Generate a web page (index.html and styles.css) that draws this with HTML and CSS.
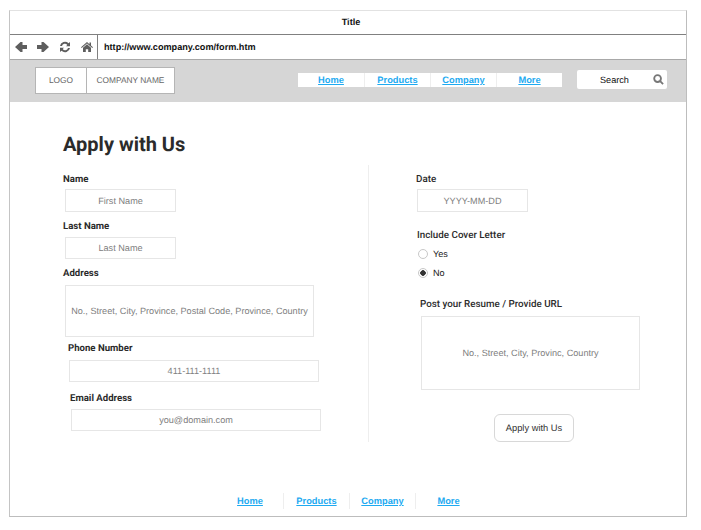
FILE: index.html
```html
<!DOCTYPE html>
<html lang="en">
<head>
<meta charset="utf-8">
<title>Apply with Us</title>
<link rel="stylesheet" href="styles.css">
</head>
<body>
<div class="frame">
  <div class="titlebar">Title</div>
  <div class="addressbar">
    <div class="browser-icons">
      <svg class="bi" viewBox="0 0 12 12"><path d="M0 6 5.500 1H7.500V4H12V8H7.500V11H5.500Z"/></svg>
      <svg class="bi" viewBox="0 0 12 12"><path d="M12 6 6.500 1H4.500V4H0V8H4.500V11H6.500Z"/></svg>
      <svg class="bi" viewBox="0 0 12 12"><path d="M1 5A5 4.800 0 0 1 9.500 2.300L11 1V5.200H7L8.300 3.900A3 3 0 0 0 3 5ZM11 7A5 4.800 0 0 1 2.500 9.700L1 11V6.800H5L3.700 8.100A3 3 0 0 0 9 7Z"/></svg>
      <svg class="bi" viewBox="0 0 12 12"><path d="M6 1 8.500 3.200V1.500H10V4.500L12 6.300 11.300 7 6 2.500 .7 7 0 6.300ZM2 6.800 6 3.300 10 6.800V11H7.200V8.200H4.800V11H2Z"/></svg>
    </div>
    <div class="url">http://www.company.com/form.htm</div>
  </div>
  <header class="topbar">
    <div class="brand">
      <span class="brand-logo">LOGO</span>
      <span class="brand-name">COMPANY NAME</span>
    </div>
    <nav class="topnav">
      <a href="#">Home</a><a href="#">Products</a><a href="#">Company</a><a href="#">More</a>
    </nav>
    <div class="search">
      <span class="search-text">Search</span>
      <svg class="search-icon" viewBox="0 0 12 12"><circle cx="5" cy="5" r="3.700"/><path d="M7.800 7.800 11 11"/></svg>
    </div>
  </header>
  <main class="content">
    <h1>Apply with Us</h1>
    <div class="columns">
      <section class="col-left">
        <label class="lbl lbl-name">Name</label>
        <div class="field f-first">First Name</div>
        <label class="lbl lbl-last">Last Name</label>
        <div class="field f-last">Last Name</div>
        <label class="lbl lbl-address">Address</label>
        <div class="field f-address">No., Street, City, Province, Postal Code, Province, Country</div>
        <label class="lbl lbl-phone">Phone Number</label>
        <div class="field f-phone">411-111-1111</div>
        <label class="lbl lbl-email">Email Address</label>
        <div class="field f-email">you@domain.com</div>
      </section>
      <section class="col-right">
        <label class="lbl lbl-date">Date</label>
        <div class="field f-date">YYYY-MM-DD</div>
        <label class="lbl lbl-cover">Include Cover Letter</label>
        <div class="radio r-yes"><span class="dot"></span>Yes</div>
        <div class="radio r-no"><span class="dot on"></span>No</div>
        <label class="lbl lbl-post">Post your Resume / Provide URL</label>
        <div class="field f-post">No., Street, City, Provinc, Country</div>
        <button class="apply" type="button">Apply with Us</button>
      </section>
    </div>
  </main>
  <footer class="bottomnav">
    <a href="#">Home</a><a href="#">Products</a><a href="#">Company</a><a href="#">More</a>
  </footer>
</div>
</body>
</html>
```
FILE: styles.css
```css
* { box-sizing: border-box; }
html, body { margin: 0; background: #fff; }
body { padding: 10px 0 0 9px; font-family: "Liberation Sans", Arial, sans-serif; font-size: 9.150px; text-rendering: geometricPrecision; color: #222; }

.frame { width: 678px; height: 507px; border: 1px solid #bdbdbd; border-top-color: #e2e2e2; border-left-color: #c4c4c4; display: flex; flex-direction: column; }

.titlebar { height: 24px; flex: none; border-bottom: 1px solid #808080; display: flex; align-items: center; justify-content: center; padding: 0 0 2px 6px; font-weight: 700; color: #111; }

.addressbar { height: 25px; flex: none; display: flex; border-bottom: 1px solid #a8a8a8; }
.browser-icons { width: 88px; border-right: 1px solid #808080; display: flex; align-items: center; gap: 10px; padding-left: 5px; }
.bi { width: 12px; height: 12px; fill: #5e5e5e; }
.url { padding-left: 6px; display: flex; align-items: center; font-weight: 700; color: #111; }

.topbar { height: 42px; flex: none; background: #d6d6d6; display: flex; align-items: center; padding-left: 25px; }
.brand { width: 140px; height: 27px; margin-bottom: 2px; display: flex; background: #fff; border: 1px solid #b5b5b5; font-size: 8.350px; color: #666; }
.brand-logo { width: 51px; border-right: 1px solid #b5b5b5; display: flex; align-items: center; justify-content: center; }
.brand-name { flex: 1; display: flex; align-items: center; justify-content: center; }

.topnav { margin: 0 0 2px 123px; width: 264px; height: 14px; background: #fff; display: flex; font-size: 9.300px; }
.topnav a { width: 66px; text-align: center; line-height: 14px; border-left: 1px solid #eee; }
.topnav a:first-child { border-left: 0; }
a { color: #1eaaf1; font-weight: 700; text-decoration: underline; }

.search { margin: 0 0 3px 15px; width: 90px; height: 19px; background: #fff; border-radius: 2px; display: flex; align-items: center; padding-left: 23px; color: #111; }
.search-text { flex: 1; }
.search-icon { width: 11px; height: 11px; margin-right: 3px; fill: none; stroke: #777; stroke-width: 2; }

.content { flex: 1; padding: 0 0 0 53px; min-height: 0; }
h1 { margin: 31px 0 0; height: 23px; line-height: 23px; font-family: Roboto, "Liberation Sans", sans-serif; font-size: 20px; font-weight: 700; color: #2b2b2b; }

.columns { display: flex; margin-top: 9px; height: 277px; }
.col-left { width: 306px; border-right: 1px solid #eee; display: flex; flex-direction: column; align-items: flex-start; }
.col-right { display: flex; flex-direction: column; align-items: flex-start; padding-left: 47px; }

.lbl { display: block; font-family: Roboto, "Liberation Sans", sans-serif; font-weight: 700; font-size: 9.600px; line-height: 12px; color: #2b2b2b; }
.field { border: 1px solid #e6e6e6; display: flex; align-items: center; justify-content: center; color: #808080; background: #fff; flex: none; white-space: nowrap; }

.lbl-name { margin-top: 9px; }
.f-first { width: 111px; height: 23px; margin: 3px 0 0 2px; }
.lbl-last { margin-top: 9px; }
.f-last { width: 111px; height: 22px; margin: 4px 0 0 2px; }
.lbl-address { margin-top: 9px; }
.f-address { width: 249px; height: 52px; margin: 5px 0 0 2px; }
.lbl-phone { margin: 6px 0 0 5px; }
.f-phone { width: 250px; height: 22px; margin: 5px 0 0 6px; }
.lbl-email { margin: 11px 0 0 7px; }
.f-email { width: 250px; height: 22px; margin: 4px 0 0 8px; }

.lbl-date { margin: 9px 0 0 0; font-weight: 500; font-size: 9.800px; }
.f-date { width: 111px; height: 23px; margin: 3px 0 0 1px; }
.lbl-cover { margin: 18px 0 0 1px; font-weight: 500; font-size: 9.800px; }
.radio { display: flex; align-items: center; height: 12px; color: #222; margin-left: 2px; gap: 5px; }
.r-yes { margin-top: 6px; }
.r-no { margin-top: 7px; }
.dot { width: 10px; height: 10px; border-radius: 50%; border: 1px solid #c8c8c8; background: #fff; display: block; }
.dot.on { background: radial-gradient(circle, #333 0 2.500px, #fff 3px); }
.lbl-post { margin: 20px 0 0 4px; font-weight: 500; font-size: 9.800px; }
.f-post { width: 219px; height: 74px; margin: 5px 0 0 5px; }
.apply { width: 80px; height: 28px; margin: 24px 0 0 78px; background: #fff; border: 1px solid #d8d8d8; border-radius: 6px; font-family: "Liberation Sans", Arial, sans-serif; font-size: 9.300px; color: #333; padding: 0; text-rendering: geometricPrecision; }

.bottomnav { height: 16px; flex: none; display: flex; margin: 0 0 7px 207px; font-size: 9.300px; }
.bottomnav a { width: 66px; text-align: center; line-height: 16px; border-left: 1px solid #eee; }
.bottomnav a:first-child { border-left: 0; }
```
